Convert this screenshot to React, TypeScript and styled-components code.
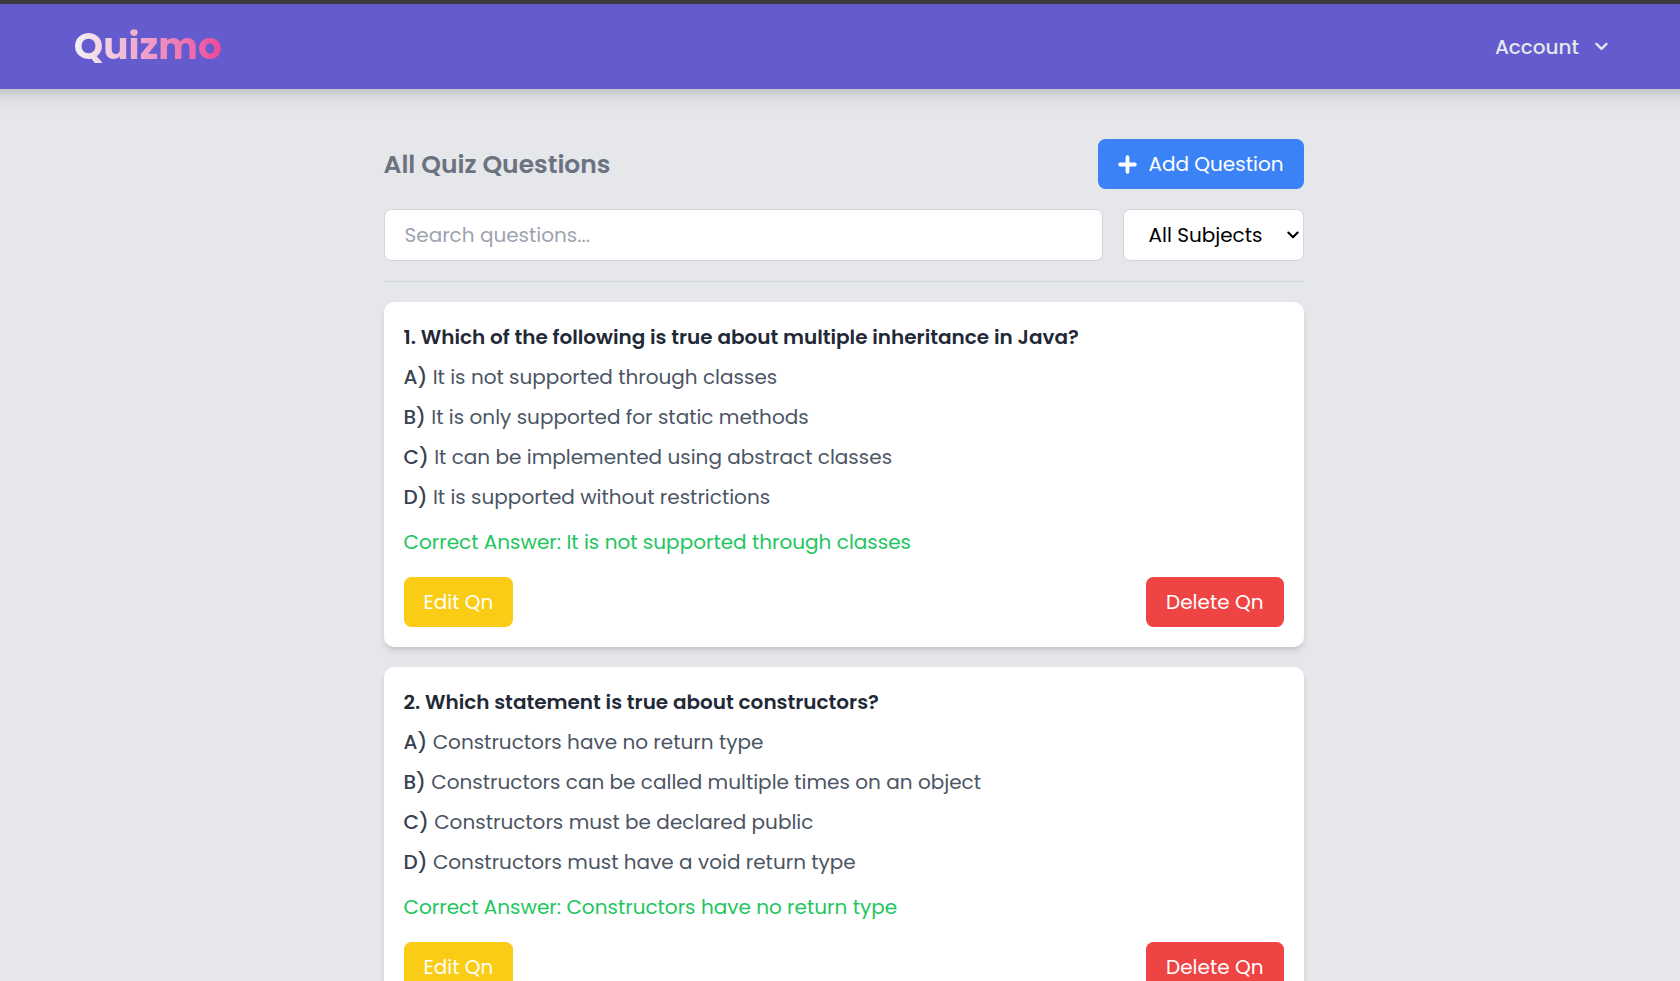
import React from 'react';
import styled, { createGlobalStyle } from 'styled-components';

const GlobalStyle = createGlobalStyle`
  *, *::before, *::after { box-sizing: border-box; }
  html, body { margin: 0; height: 100%; overflow: hidden; }
  body {
    background: #e5e7eb;
    font-family: Poppins, Inter, 'Liberation Sans', sans-serif;
    font-size: 20px;
    line-height: 30px;
  }
  button, input { font: inherit; }
`;

const Page = styled.div`
  height: 981px;
  overflow: hidden;
  display: flex;
  flex-direction: column;
  border-top: 4px solid #3b3b3d;
`;

/* The shadow spreads past both sides so that it stays even across the full width. */
const Header = styled.header`
  flex: none;
  height: 85px;
  padding: 0 72px 0 73.75px;
  display: flex;
  align-items: center;
  justify-content: space-between;
  background: #645bcf;
  box-shadow: 0 -21.25px 18.75px 30px rgba(0, 0, 0, 0.1), 0 -28px 10px 30px rgba(0, 0, 0, 0.1);
  clip-path: inset(0 0 -60px 0);
`;

const Logo = styled.span`
  font-size: 37.5px;
  line-height: 45px;
  font-weight: 700;
  color: transparent;
  background: linear-gradient(to right, #f3f4f6, #ec4899);
  background-clip: text;
  -webkit-background-clip: text;
`;

const AccountMenu = styled.button`
  display: flex;
  align-items: center;
  gap: 16px;
  padding: 0;
  border: 0;
  background: none;
  color: #e5e7eb;
  font-weight: 500;
`;

const Main = styled.main`
  flex: none;
  width: 920px;
  margin: 50px 0 0 383.5px;
  display: flex;
  flex-direction: column;
`;

const TitleRow = styled.div`
  display: flex;
  align-items: center;
  justify-content: space-between;
`;

const Title = styled.h1`
  margin: 0;
  font-size: 25px;
  line-height: 35px;
  font-weight: 600;
  color: #6b7280;
`;

const Button = styled.button<{ $bg: string }>`
  height: 50px;
  padding: 0 20px;
  display: flex;
  align-items: center;
  justify-content: center;
  gap: 11px;
  border: 0;
  border-radius: 7.5px;
  background: ${(p) => p.$bg};
  color: #fff;
  white-space: nowrap;
`;

const Filters = styled.div`
  display: flex;
  gap: 20px;
  margin-top: 20px;
  padding-bottom: 20px;
  border-bottom: 1px solid #d1d5db;
`;

const Search = styled.input`
  flex: 1;
  min-width: 0;
  height: 52px;
  padding: 0 20px;
  border: 1px solid #d1d5db;
  border-radius: 7.5px;
  background: #fff;
  outline: none;
  &::placeholder { color: #9ca3af; opacity: 1; }
`;

const SubjectSelect = styled.button`
  flex: none;
  width: 181px;
  height: 52px;
  padding: 0 4px 0 25px;
  display: flex;
  align-items: center;
  justify-content: space-between;
  border: 1px solid #d1d5db;
  border-radius: 7.5px;
  background: #fff;
  color: #000;
`;

const Card = styled.article`
  margin-top: 20px;
  padding: 20px;
  border-radius: 10px;
  background: #fff;
  box-shadow: 0 5px 7.5px -1px rgba(0, 0, 0, 0.1), 0 2.5px 5px -2.5px rgba(0, 0, 0, 0.1);
`;

const Question = styled.h2`
  margin: 0;
  font-size: 20px;
  line-height: 30px;
  font-weight: 600;
  color: #1f2937;
`;

const Options = styled.ul`
  margin: 10px 0 0;
  padding: 0;
  list-style: none;
  display: flex;
  flex-direction: column;
  gap: 10px;
`;

const Option = styled.li`
  color: #4b5563;
`;

const Letter = styled.span`
  font-weight: 500;
  color: #374151;
`;

const Answer = styled.p`
  margin: 15px 0 20px;
  color: #22c55e;
`;

const Actions = styled.div`
  display: flex;
  justify-content: space-between;
`;

const ChevronIcon = ({ width, height }: { width: number; height: number }) => (
  <svg
    width={width}
    height={height}
    viewBox="0 0 14 9"
    fill="none"
    stroke="currentColor"
    strokeWidth="2.5"
    strokeLinecap="round"
    strokeLinejoin="round"
  >
    <path d="M1.6 1.7 7 7.1l5.4-5.4" />
  </svg>
);

const PlusIcon = () => (
  <svg width="19" height="19" viewBox="0 0 19 19" fill="none" stroke="currentColor" strokeWidth="3.8" strokeLinecap="round">
    <path d="M9.5 2.2v14.6M2.2 9.5h14.6" />
  </svg>
);

const letters = ['A', 'B', 'C', 'D'];

const items = [
  {
    question: 'Which of the following is true about multiple inheritance in Java?',
    options: [
      'It is not supported through classes',
      'It is only supported for static methods',
      'It can be implemented using abstract classes',
      'It is supported without restrictions',
    ],
    answer: 'It is not supported through classes',
  },
  {
    question: 'Which statement is true about constructors?',
    options: [
      'Constructors have no return type',
      'Constructors can be called multiple times on an object',
      'Constructors must be declared public',
      'Constructors must have a void return type',
    ],
    answer: 'Constructors have no return type',
  },
];

export default function App() {
  return (
    <Page>
      <GlobalStyle />
      <Header>
        <Logo>Quizmo</Logo>
        <AccountMenu>
          Account
          <ChevronIcon width={13} height={9} />
        </AccountMenu>
      </Header>
      <Main>
        <TitleRow>
          <Title>All Quiz Questions</Title>
          <Button $bg="#3b82f6">
            <PlusIcon />
            Add Question
          </Button>
        </TitleRow>
        <Filters>
          <Search placeholder="Search questions..." />
          <SubjectSelect>
            All Subjects
            <ChevronIcon width={12} height={8} />
          </SubjectSelect>
        </Filters>
        {items.map((item, i) => (
          <Card key={item.question}>
            <Question>{`${i + 1}. ${item.question}`}</Question>
            <Options>
              {item.options.map((option, j) => (
                <Option key={option}>
                  <Letter>{letters[j]})</Letter> {option}
                </Option>
              ))}
            </Options>
            <Answer>Correct Answer: {item.answer}</Answer>
            <Actions>
              <Button $bg="#facc15">Edit Qn</Button>
              <Button $bg="#ef4444">Delete Qn</Button>
            </Actions>
          </Card>
        ))}
      </Main>
    </Page>
  );
}
